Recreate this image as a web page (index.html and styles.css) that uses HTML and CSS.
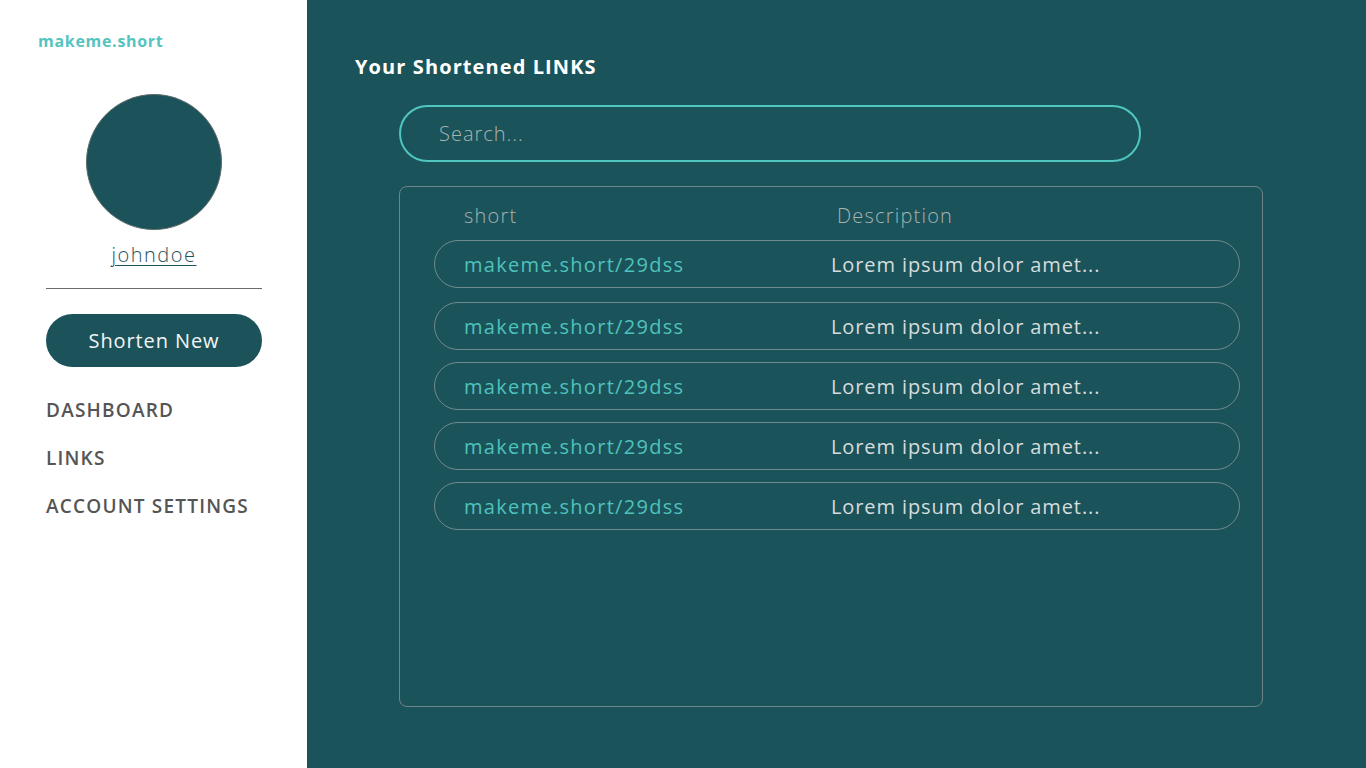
FILE: index.html
```html
<!DOCTYPE html>
<html lang="en">
<head>
<meta charset="utf-8">
<title>makeme.short</title>
<link rel="stylesheet" href="styles.css">
</head>
<body>
<div class="app">
  <aside class="sidebar">
    <div class="logo">makeme.short</div>
    <div class="profile">
      <div class="avatar"></div>
      <a class="username" href="#">johndoe</a>
    </div>
    <hr class="divider">
    <button class="btn-new">Shorten New</button>
    <nav class="nav">
      <a href="#" class="nav-item">DASHBOARD</a>
      <a href="#" class="nav-item">LINKS</a>
      <a href="#" class="nav-item">ACCOUNT SETTINGS</a>
    </nav>
  </aside>
  <main class="main">
    <h1 class="title">Your Shortened LINKS</h1>
    <div class="search"><input type="text" placeholder="Search..."></div>
    <section class="table">
      <div class="thead">
        <span class="col-short">short</span>
        <span class="col-desc">Description</span>
      </div>
      <div class="rows">
        <div class="row"><span class="col-short">makeme.short/29dss</span><span class="col-desc">Lorem ipsum dolor amet...</span></div>
        <div class="row"><span class="col-short">makeme.short/29dss</span><span class="col-desc">Lorem ipsum dolor amet...</span></div>
        <div class="row"><span class="col-short">makeme.short/29dss</span><span class="col-desc">Lorem ipsum dolor amet...</span></div>
        <div class="row"><span class="col-short">makeme.short/29dss</span><span class="col-desc">Lorem ipsum dolor amet...</span></div>
        <div class="row"><span class="col-short">makeme.short/29dss</span><span class="col-desc">Lorem ipsum dolor amet...</span></div>
      </div>
    </section>
  </main>
</div>
</body>
</html>
```
FILE: styles.css
```css
* { box-sizing: border-box; }
html, body { margin: 0; padding: 0; height: 100%; }
body {
  font-family: "Open Sans", "DejaVu Sans", sans-serif;
  background: #1b535b;
}
.app { display: flex; height: 768px; }
.sidebar {
  width: 307px;
  flex: none;
  background: #ffffff;
  padding: 31px 0 0 46px;
  display: flex;
  flex-direction: column;
}
.logo {
  margin-left: -8px;
  font-size: 16px;
  font-weight: 700;
  letter-spacing: 0.7px;
  color: #55c4bf;
  line-height: 20px;
}
.profile {
  width: 216px;
  display: flex;
  flex-direction: column;
  align-items: center;
  margin-top: 43px;
}
.avatar {
  width: 136px;
  height: 136px;
  border-radius: 50%;
  background: #1c535b;
  border: 1px solid #5d6a6c;
}
.username {
  margin-top: 11px;
  font-size: 20px;
  font-weight: 300;
  letter-spacing: 1.5px;
  color: #1c535b;
  line-height: 28px;
  text-decoration: underline;
  text-decoration-thickness: 1px;
  text-underline-offset: 3px;
}
.divider {
  width: 216px;
  margin: 19px 0 0;
  border: 0;
  border-top: 1px solid #6b6b6b;
}
.btn-new {
  margin-top: 25px;
  width: 216px;
  height: 53px;
  border: 0;
  border-radius: 27px;
  background: #1c535b;
  color: #f2f5f5;
  font-family: inherit;
  font-size: 20px;
  font-weight: 400;
  letter-spacing: 0.9px;
}
.nav {
  display: flex;
  flex-direction: column;
  gap: 22px;
  margin-top: 30px;
}
.nav-item {
  font-size: 19px;
  font-weight: 600;
  letter-spacing: 1.2px;
  color: #555555;
  text-decoration: none;
  line-height: 26px;
}
.main {
  flex: 1;
  padding: 54px 0 0 48px;
}
.title {
  margin: 0;
  font-size: 20px;
  font-weight: 700;
  letter-spacing: 1.1px;
  color: #ffffff;
  line-height: 26px;
}
.search {
  margin: 25px 0 0 44px;
  width: 742px;
  height: 57px;
  border: 2px solid #4fc6c0;
  border-radius: 29px;
  display: flex;
  align-items: center;
  padding-left: 36px;
}
.search input {
  background: transparent;
  border: 0;
  outline: none;
  width: 100%;
  font-family: inherit;
  font-size: 20px;
  font-weight: 300;
  letter-spacing: 1px;
  color: #ddd;
}
.search input::placeholder { color: #a8b3b4; }
.table {
  margin: 24px 0 0 44px;
  width: 864px;
  height: 521px;
  border: 1px solid #6e8587;
  border-radius: 8px;
  padding: 8px 22px 0 34px;
}
.thead {
  display: flex;
  padding-left: 30px;
  height: 40px;
  margin-bottom: 5px;
  align-items: center;
  font-size: 20px;
  font-weight: 300;
  letter-spacing: 1.2px;
  color: #a6b2b3;
}
.thead .col-desc { margin-left: 6px; }
.rows {
  display: flex;
  flex-direction: column;
  gap: 12px;
}
.row {
  height: 48px;
  border: 1px solid #718a8c;
  border-radius: 24px;
  display: flex;
  align-items: center;
  padding-left: 29px;
  font-size: 20px;
  font-weight: 400;
  letter-spacing: 0.9px;
}
.row:first-child { margin-bottom: 2px; }
.col-short { width: 367px; flex: none; }
.row .col-short { color: #4ec2bb; letter-spacing: 1.3px; }
.row .col-desc { color: #d6dcdc; }
```
